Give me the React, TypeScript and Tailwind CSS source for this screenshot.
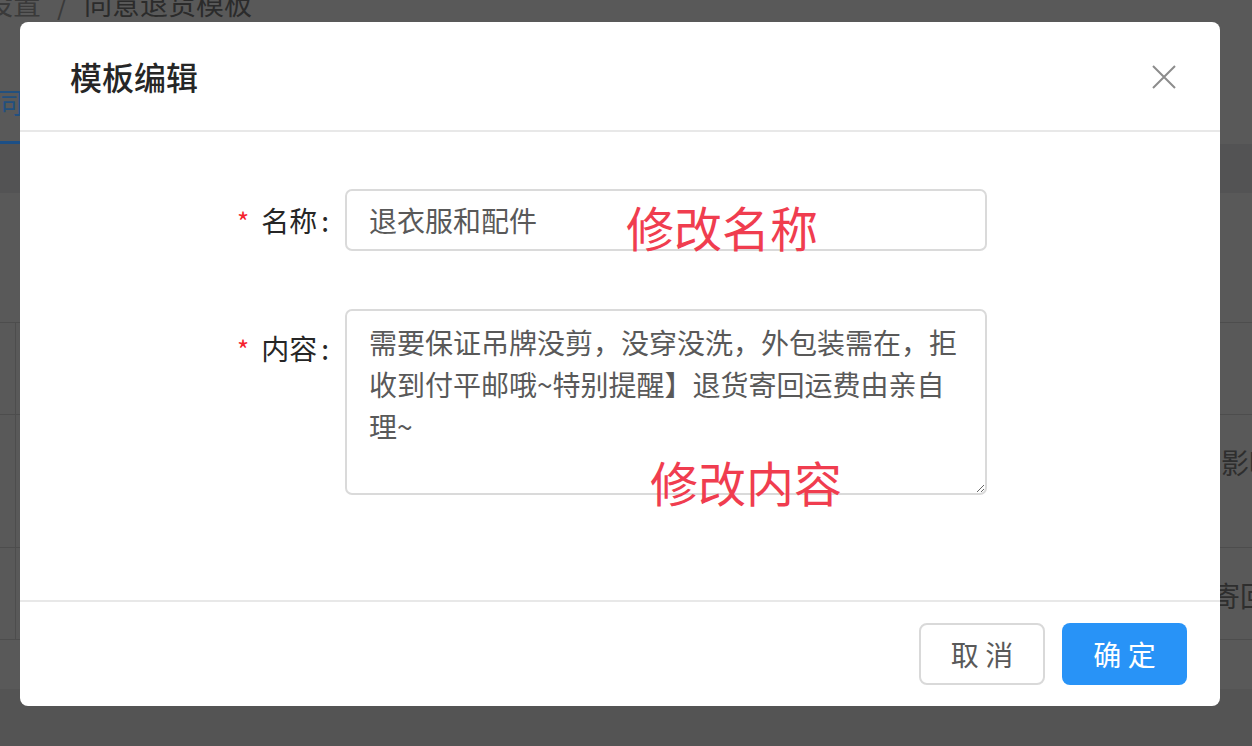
export default function App() {
  return (
    <div className="relative w-[1252px] h-[746px] overflow-hidden bg-[#595959] font-['Noto_Sans_CJK_SC','Noto_Sans',sans-serif]">
      {/* page behind the mask */}
      <div className="flex flex-col">
        <div className="-mt-[11px] -ml-[15px] flex h-[28px] items-center whitespace-nowrap text-[28px] leading-[28px]">
          <span className="text-[#3a3a3a]">设置</span>
          <span className="mx-[16px] text-[#3a3a3a]">/</span>
          <span className="text-[#2b2b2b]">同意退货模板</span>
        </div>
        <div className="mt-[71px] -ml-[5px] w-[220px] border-b-[3px] border-[#1c4f86] pb-[25px] text-[28px] leading-[28px] text-[#22507f]">
          同意退货
        </div>
        <div className="h-[49px] bg-[#535354]" />
        <div className="h-[130px] border-b border-[#4d4d4d]" />
        <div className="flex h-[92px] border-b border-[#4d4d4d]">
          <div className="w-[16px] border-r border-[#4d4d4d]" />
        </div>
        <div className="flex h-[133px] border-b border-[#4d4d4d]">
          <div className="w-[16px] border-r border-[#4d4d4d]" />
          <div className="ml-auto w-[31px] overflow-hidden whitespace-nowrap pt-[33px] text-[28px] leading-[28px] text-[#2e2e2e]">
            影响
          </div>
        </div>
        <div className="flex h-[92px] border-b border-[#4d4d4d]">
          <div className="w-[16px] border-r border-[#4d4d4d]" />
          <div className="ml-auto w-[40px] overflow-hidden whitespace-nowrap pt-[33px] text-[28px] leading-[28px] text-[#2e2e2e]">
            寄回
          </div>
        </div>
        <div className="h-[49px]" />
        <div className="h-[60px] bg-[#545454]" />
      </div>

      {/* modal */}
      <div className="absolute left-[20px] top-[22px] flex h-[684px] w-[1200px] flex-col rounded-[8px] bg-white">
        <div className="flex h-[110px] items-center justify-between border-b-2 border-[#e8e8e8] pl-[50px] pr-[44px]">
          <span className="text-[32px] font-medium text-[#262626]">模板编辑</span>
          <svg width="24" height="24" viewBox="0 0 24 24" className="mt-[2px]">
            <path d="M1 1 L23 23 M23 1 L1 23" stroke="#8c8c8c" strokeWidth="2" fill="none" />
          </svg>
        </div>

        <div className="relative flex-1 pt-[57px]">
          <div className="flex items-center">
            <div className="flex w-[325px] items-center justify-end text-[28px] text-[#262626]">
              <span className="mr-[12px] text-[26px] text-[#f5222d]">*</span>
              <span>名称</span>
              <span className="ml-[4px] mr-[16px]">:</span>
            </div>
            <div className="flex h-[62px] w-[642px] items-center rounded-[7px] border-2 border-[#dadada] pl-[22px] text-[28px] text-[#595959]">
              退衣服和配件
            </div>
          </div>

          <div className="mt-[58px] flex items-start">
            <div className="mt-[8px] flex h-[62px] w-[325px] items-center justify-end text-[28px] text-[#262626]">
              <span className="mr-[12px] text-[26px] text-[#f5222d]">*</span>
              <span>内容</span>
              <span className="ml-[4px] mr-[16px]">:</span>
            </div>
            <textarea
              readOnly
              defaultValue="需要保证吊牌没剪，没穿没洗，外包装需在，拒收到付平邮哦~特别提醒】退货寄回运费由亲自理~"
              className="h-[186px] w-[642px] overflow-hidden rounded-[7px] border-2 border-[#dadada] pl-[22px] pr-[20px] pt-[10px] text-[28px] leading-[42px] text-[#595959] outline-none"
            />
          </div>

          <span className="absolute left-[606px] top-[70px] text-[48px] leading-[48px] text-[#f03d4f]">修改名称</span>
          <span className="absolute left-[630px] top-[325px] text-[48px] leading-[48px] text-[#f03d4f]">修改内容</span>
        </div>

        <div className="flex h-[106px] items-center justify-end gap-[17px] border-t-2 border-[#e8e8e8] pr-[33px]">
          <button className="h-[62px] w-[126px] rounded-[8px] border-2 border-[#d9d9d9] bg-white text-[28px] text-[#595959]">
            取 消
          </button>
          <button className="h-[62px] w-[125px] rounded-[8px] bg-[#2893f7] text-[28px] text-white">
            确 定
          </button>
        </div>
      </div>
    </div>
  );
}
